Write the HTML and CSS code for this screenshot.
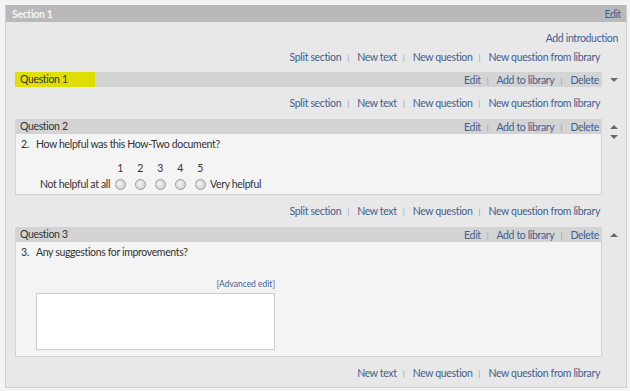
FILE: index.html
```html
<!DOCTYPE html>
<html lang="en">
<head>
    <meta charset="UTF-8">
    <meta name="viewport" content="width=device-width, initial-scale=1.0">
    <link rel="stylesheet" href="styles.css">
</head>
<body>
<div class="section">
    <div class="section-header">
        <span class="section-title">Section 1</span>
        <a class="link">Edit</a>
    </div>
    <div class="section-body">
        <div class="intro-row"><a class="link">Add introduction</a></div>

        <div class="toolbar">
            <a class="link">Split section</a><span class="sep">|</span>
            <a class="link">New text</a><span class="sep">|</span>
            <a class="link">New question</a><span class="sep">|</span>
            <a class="link">New question from library</a>
        </div>

        <div class="item">
            <div class="question">
                <div class="question-header">
                    <span class="question-title highlighted">Question 1</span>
                    <span class="question-actions">
                        <a class="link">Edit</a><span class="sep">|</span>
                        <a class="link">Add to library</a><span class="sep">|</span>
                        <a class="link">Delete</a>
                    </span>
                </div>
            </div>
            <div class="arrows">
                <span class="arrow-down"></span>
            </div>
        </div>

        <div class="toolbar">
            <a class="link">Split section</a><span class="sep">|</span>
            <a class="link">New text</a><span class="sep">|</span>
            <a class="link">New question</a><span class="sep">|</span>
            <a class="link">New question from library</a>
        </div>

        <div class="item">
            <div class="question">
                <div class="question-header">
                    <span class="question-title">Question 2</span>
                    <span class="question-actions">
                        <a class="link">Edit</a><span class="sep">|</span>
                        <a class="link">Add to library</a><span class="sep">|</span>
                        <a class="link">Delete</a>
                    </span>
                </div>
                <div class="question-body q2-body">
                    <div class="question-text"><span class="num">2.</span>How helpful was this How-Two document?</div>
                    <table class="scale">
                        <tr>
                            <td></td>
                            <td class="scale-num">1</td>
                            <td class="scale-num">2</td>
                            <td class="scale-num">3</td>
                            <td class="scale-num">4</td>
                            <td class="scale-num">5</td>
                            <td></td>
                        </tr>
                        <tr>
                            <td class="scale-label left">Not helpful at all</td>
                            <td><span class="radio"></span></td>
                            <td><span class="radio"></span></td>
                            <td><span class="radio"></span></td>
                            <td><span class="radio"></span></td>
                            <td><span class="radio"></span></td>
                            <td class="scale-label">Very helpful</td>
                        </tr>
                    </table>
                </div>
            </div>
            <div class="arrows">
                <span class="arrow-up"></span>
                <span class="arrow-down"></span>
            </div>
        </div>

        <div class="toolbar">
            <a class="link">Split section</a><span class="sep">|</span>
            <a class="link">New text</a><span class="sep">|</span>
            <a class="link">New question</a><span class="sep">|</span>
            <a class="link">New question from library</a>
        </div>

        <div class="item">
            <div class="question">
                <div class="question-header">
                    <span class="question-title">Question 3</span>
                    <span class="question-actions">
                        <a class="link">Edit</a><span class="sep">|</span>
                        <a class="link">Add to library</a><span class="sep">|</span>
                        <a class="link">Delete</a>
                    </span>
                </div>
                <div class="question-body q3-body">
                    <div class="question-text"><span class="num">3.</span>Any suggestions for improvements?</div>
                    <div class="answer">
                        <div class="advanced"><a class="link">[Advanced edit]</a></div>
                        <div class="answer-box"></div>
                    </div>
                </div>
            </div>
            <div class="arrows">
                <span class="arrow-up"></span>
            </div>
        </div>

        <div class="toolbar last">
            <a class="link">New text</a><span class="sep">|</span>
            <a class="link">New question</a><span class="sep">|</span>
            <a class="link">New question from library</a>
        </div>
    </div>
</div>
</body>
</html>
```

FILE: styles.css
```css
body {
    margin: 0;
    padding: 5px 3px 0 5px;
    background: #f3f3f3;
    font-family: Lato, "Open Sans", sans-serif;
    font-size: 10.5px;
    letter-spacing: -0.35px;
    color: #333;
}

.link {
    color: #41608f;
    cursor: pointer;
}

.sep {
    color: #999;
    font-size: 8px;
    margin: 0 6px;
}

.section {
    width: 620px;
    border: 1px solid #cfcfcf;
    border-top: none;
    background: #e8e8e8;
}

.section-header {
    display: flex;
    justify-content: space-between;
    align-items: center;
    height: 17px;
    padding: 0 5px 0 6px;
    background: #b9b9b9;
}

.section-title {
    color: #f5f5f5;
    font-weight: bold;
}

.section-body {
    padding: 8px 0 6px 9px;
}

.intro-row {
    height: 16px;
    line-height: 16px;
    text-align: right;
    padding-right: 8px;
    margin-bottom: 3px;
}

.toolbar {
    height: 16px;
    line-height: 16px;
    width: 585px;
    padding-right: 2px;
    text-align: right;
    margin-bottom: 7px;
}

.item + .toolbar {
    margin-top: 8px;
    margin-bottom: 8px;
}

.toolbar.last {
    margin-bottom: 0;
}

.item {
    display: flex;
}

.question {
    width: 587px;
}

.question-header {
    display: flex;
    justify-content: space-between;
    align-items: center;
    height: 15px;
    background: #d4d4d4;
}

.question-title {
    padding-left: 5px;
    line-height: 15px;
    color: #333;
}

.highlighted {
    width: 75px;
    background: #dede00;
}

.question-actions {
    padding-right: 3px;
}

.question-body {
    background: #f5f4f4;
    border: 1px solid #d3d3d3;
    border-top: none;
    padding: 3px 0 0 5px;
}

.q2-body {
    height: 57px;
}

.q3-body {
    height: 111px;
}

.question-text {
    line-height: 15px;
}

.num {
    display: inline-block;
    width: 15px;
}

.scale {
    border-collapse: collapse;
    margin: 8px 0 0 19px;
}

.scale td {
    padding: 0;
    height: 16px;
    text-align: center;
    white-space: nowrap;
}

.scale-num {
    width: 20px;
}

.scale-label {
    text-align: left;
    padding-left: 1px;
}

.scale td.left {
    text-align: right;
    padding-right: 0;
}

.radio {
    display: inline-block;
    width: 9px;
    height: 9px;
    border-radius: 50%;
    border: 1px solid #9a9a9a;
    background: radial-gradient(circle at 40% 40%, #f4f4f4, #c8c8c8);
    vertical-align: middle;
}

.answer {
    width: 239px;
    margin: 18px 0 0 15px;
}

.advanced {
    text-align: right;
    font-size: 8.5px;
    letter-spacing: 0;
    line-height: 12px;
    margin-bottom: 3px;
}

.answer-box {
    height: 55px;
    background: #fff;
    border: 1px solid #cdcdcd;
}

.arrows {
    flex: 1;
    display: flex;
    flex-direction: column;
    align-items: center;
    padding-top: 6px;
    gap: 6px;
}

.arrow-up,
.arrow-down {
    width: 0;
    height: 0;
    border-left: 4px solid transparent;
    border-right: 4px solid transparent;
}

.arrow-up {
    border-bottom: 4px solid #6a6a6a;
}

.arrow-down {
    border-top: 4px solid #6a6a6a;
}
```
